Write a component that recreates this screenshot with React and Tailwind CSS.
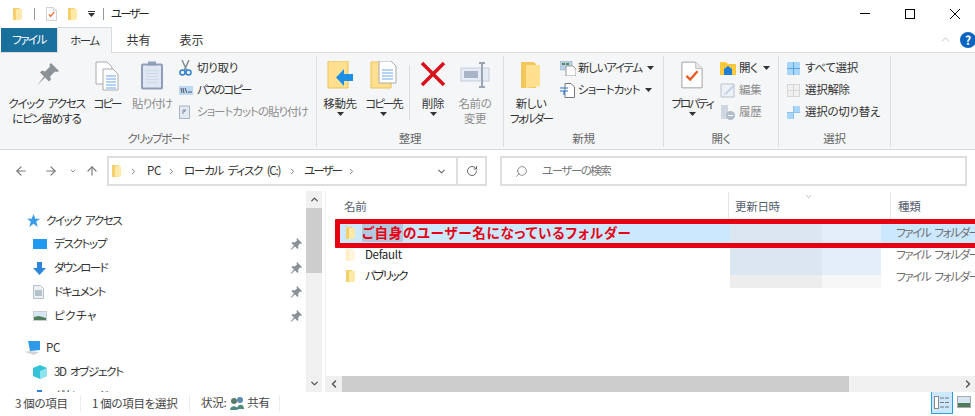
import { ArrowLeft, ArrowRight, ArrowUp, ChevronDown, ChevronUp, ChevronRight, RotateCw, Search } from 'lucide-react';

const Folder = ({ className = 'w-[10px] h-[14px]', light }) => (
  <svg viewBox="0 0 10 14" className={className}>
    <path d="M0 1h6l1 1v11H0z" fill={light ? '#fdeec4' : '#f5cf6b'} />
    <path d="M3 2h6v10l-6 1.5z" fill={light ? '#fff5dc' : '#ffe9a8'} />
  </svg>
);

const Caret = ({ className = '' }) => (
  <svg viewBox="0 0 7 4" className={`w-[7px] h-[4px] ${className}`}>
    <path d="M0 0h7L3.5 4z" fill="#333" />
  </svg>
);

const PinSmall = () => (
  <svg viewBox="0 0 12 12" className="w-[12px] h-[12px]">
    <path d="M7 0l5 5-1 1-1-.5L8 8l.5 2-1 1-2.500-2.500L1 12l-.5-.5L4 7.500 1.500 5l1-1 2 .5L7 2.500 6.500 1z" fill="#8a9299" />
  </svg>
);

const DocCheck = ({ className }) => (
  <svg viewBox="0 0 24 30" className={className}>
    <path d="M1 1h15l7 7v21H1z" fill="#fff" stroke="#9a9a9a" />
    <path d="M16 1v7h7" fill="#e8e8e8" stroke="#bbb" />
    <path d="M6 16l4 4 8-9" fill="none" stroke="#e8591f" strokeWidth="2.500" />
  </svg>
);

const CopyDocs = ({ className }) => (
  <svg viewBox="0 0 24 30" className={className}>
    <path d="M1 1h11l5 5v17H1z" fill="#fff" stroke="#aaa" />
    <path d="M8 8h10l5 5v16H8z" fill="#fff" stroke="#aaa" />
    <path d="M11 15h10M11 18h10M11 21h10M11 24h10M11 27h10" stroke="#6aa5e8" />
  </svg>
);

function Big({ w, lines, gray, caret, children }) {
  return (
    <div className={`flex flex-col items-center shrink-0 ${w}`}>
      <div className="h-[35px] flex items-start justify-center">{children}</div>
      {lines.map((l, i) => (
        <div key={i} className={`h-[15px] leading-[15px] whitespace-nowrap ${gray ? 'text-[#8d8d8d]' : 'text-[#333]'}`}>{l}</div>
      ))}
      {caret && <Caret className="mt-[1px]" />}
    </div>
  );
}

function Small({ icon, label, gray, caret, slot = 'w-[18px]' }) {
  return (
    <div className="h-[22px] flex items-center whitespace-nowrap">
      <div className={`${slot} shrink-0 flex items-center`}>{icon}</div>
      <span className={gray ? 'text-[#8d8d8d]' : 'text-[#333]'}>{label}</span>
      {caret && <Caret className="ml-[5px]" />}
    </div>
  );
}

function Group({ w, label, children }) {
  return (
    <div className={`${w} shrink-0 h-[91px] border-r border-[#dcdddf] flex flex-col`}>
      <div className="flex-1 flex">{children}</div>
      <div className="h-[18px] leading-[18px] text-center text-[#666]">{label}</div>
    </div>
  );
}

function Ribbon() {
  return (
    <div className="h-[97px] bg-[#f5f6f7] border-b border-[#dadbdc] flex pt-[3px]">
      <Group w="w-[317px]" label={<span className="tracking-[-1.4px]">クリップボード</span>}>
        <div className="flex pt-[5px] pl-[7px]">
          <Big w="w-[79px]" lines={[<span className="tracking-[-1.2px] [word-spacing:3px]">クイック アクセス</span>, <span className="tracking-[-1px]">にピン留めする</span>]}>
            <svg viewBox="0 0 24 24" className="w-[24px] h-[26px]">
              <path d="M16 1l8 8-2 1-2-.5-5 5 1 3-2 2-4-4-8 8 7-9-4-4 2-2 3 1 5-5-.5-2z" fill="#8b9298" />
            </svg>
          </Big>
          <Big w="w-[42px]" lines={[<span className="tracking-[-2px]">コピー</span>]}><CopyDocs className="w-[24px] h-[30px]" /></Big>
          <Big w="w-[48px]" gray lines={[<span className="tracking-[-1px]">貼り付け</span>]}>
            <svg viewBox="0 0 22 28" className="w-[22px] h-[29px]">
              <rect x="1" y="3" width="20" height="24" rx="1" fill="#dfe7f2" stroke="#8f9fb8" strokeWidth="2" />
              <rect x="7" y="0" width="8" height="4" fill="#8f9fb8" />
              <path d="M5 9h12M5 12h12M5 15h12M5 18h12M5 21h12" stroke="#cfd9e8" />
            </svg>
          </Big>
          <div className="pl-[3px] -mt-[4px]">
            <Small label="切り取り" icon={
              <svg viewBox="0 0 13 16" className="w-[13px] h-[16px]">
                <path d="M3 0l5 11M10 0L5 11" stroke="#7a8794" strokeWidth="1.400" />
                <circle cx="3.500" cy="12.500" r="2.500" fill="none" stroke="#2f7fcf" strokeWidth="1.500" />
                <circle cx="9.500" cy="12.500" r="2.500" fill="none" stroke="#2f7fcf" strokeWidth="1.500" />
              </svg>
            } />
            <Small label={<span className="tracking-[-2px]">パスのコピー</span>} icon={
              <svg viewBox="0 0 14 9" className="w-[14px] h-[9px]">
                <rect width="14" height="9" fill="#bcd8f2" />
                <path d="M2 2l1 5M4 2l1 5M6 2l2 5M9 6h4" stroke="#334" strokeWidth=".8" />
              </svg>
            } />
            <Small gray label={<span className="tracking-[-1px]">ショートカットの貼り付け</span>} icon={
              <svg viewBox="0 0 11 14" className="w-[11px] h-[14px]">
                <rect x=".5" y="1" width="10" height="12.500" fill="#e3e9f2" stroke="#a9b4c4" />
                <path d="M4 9V5h3M5 7l2-2" stroke="#7c8797" fill="none" />
              </svg>
            } />
          </div>
        </div>
      </Group>

      <Group w="w-[187px]" label="整理">
        <div className="flex pt-[5px] pl-[1px]">
          <Big w="w-[44px]" caret lines={['移動先']}>
            <svg viewBox="0 0 27 28" className="w-[27px] h-[28px]">
              <path d="M1 0h20v27H1z" fill="#ffe08f" stroke="#e8c25a" />
              <path d="M26 13v7h-9v5l-8-8.500L17 8v5z" fill="#1d8fe6" />
            </svg>
          </Big>
          <Big w="w-[43px]" caret lines={[<span className="tracking-[-2px]">コピー先</span>]}>
            <svg viewBox="0 0 27 28" className="w-[27px] h-[28px]">
              <path d="M1 1h20v26H1z" fill="#ffe08f" stroke="#e8c25a" />
              <path d="M9 0h12l5 5v17H9z" fill="#fff" stroke="#aaa" />
              <path d="M12 9h11M12 12h11M12 15h11M12 18h11" stroke="#6aa5e8" />
            </svg>
          </Big>
          <div className="w-px h-[55px] bg-[#dcdddf] ml-[4px] mt-[4px] shrink-0" />
          <Big w="w-[46px]" caret lines={['削除']}>
            <svg viewBox="0 0 26 26" className="w-[26px] h-[26px]">
              <path d="M2 2l22 22M24 2L2 24" stroke="#d8111c" strokeWidth="3.500" />
            </svg>
          </Big>
          <Big w="w-[38px]" gray lines={['名前の', '変更']}>
            <svg viewBox="0 0 30 28" className="w-[30px] h-[28px]">
              <rect x="1" y="7" width="28" height="13" fill="#e6ecf5" stroke="#c5cedb" />
              <rect x="4" y="10" width="14" height="7" fill="#a9b5c6" />
              <path d="M19 2h6M22 2v24M19 26h6" stroke="#9aa4b2" strokeWidth="2" fill="none" />
            </svg>
          </Big>
        </div>
      </Group>

      <Group w="w-[160px]" label="新規">
        <div className="flex pt-[5px]">
          <Big w="w-[54px]" lines={[<span className="tracking-[-0.5px]">新しい</span>, <span className="tracking-[-1.8px]">フォルダー</span>]}>
            <svg viewBox="0 0 20 28" className="w-[20px] h-[28px]">
              <path d="M0 1h13l2 2v24H0z" fill="#f2c85c" />
              <path d="M5 4h14v21L5 27z" fill="#ffe08f" />
            </svg>
          </Big>
          <div className="pl-[2px] -mt-[4px]">
            <Small caret label={<span className="tracking-[-1.3px]">新しいアイテム</span>} icon={
              <svg viewBox="0 0 16 15" className="w-[16px] h-[15px]">
                <rect x="0" y="0" width="12" height="9" fill="#b8cfe6" stroke="#8fa6bd" strokeWidth=".5" />
                <path d="M2 2h3v2H2zM6 2h3v2H6z" fill="#5b8a5e" />
                <path d="M6 5h7l3 3v7H6z" fill="#fff" stroke="#999" />
              </svg>
            } />
            <Small caret label={<span className="tracking-[-0.9px]">ショートカット</span>} icon={
              <svg viewBox="0 0 15 15" className="w-[15px] h-[15px]">
                <path d="M5 .5h6l3.500 3.500v10.500H5z" fill="#fff" stroke="#777" />
                <path d="M0 5h8M0 8h8" stroke="#2272c8" strokeWidth="1.200" />
                <path d="M4 8v4" stroke="#2272c8" strokeWidth="1.200" />
              </svg>
            } />
          </div>
        </div>
      </Group>

      <Group w="w-[115px]" label="開く">
        <div className="flex pt-[5px]">
          <Big w="w-[56px]" caret lines={[<span className="tracking-[-2px]">プロパティ</span>]}>
            <DocCheck className="w-[22px] h-[28px]" />
          </Big>
          <div className="-mt-[4px]">
            <Small caret slot="w-[19px]" label="開く" icon={
              <svg viewBox="0 0 16 14" className="w-[16px] h-[14px]">
                <path d="M0 1h6l2 2h8v11H0z" fill="#ffc83d" />
                <path d="M4 8l4-3 4 3v6H4z" fill="#1b7fd6" />
              </svg>
            } />
            <Small gray slot="w-[19px]" label="編集" icon={
              <svg viewBox="0 0 15 15" className="w-[15px] h-[15px]">
                <path d="M1 1h9l4 0v13H1z" fill="#eef1f5" stroke="#b9c2cd" />
                <path d="M5 10l8-8 2 1-8 8-3 1z" fill="#c3d4e6" />
              </svg>
            } />
            <Small gray slot="w-[19px]" label="履歴" icon={
              <svg viewBox="0 0 15 15" className="w-[15px] h-[15px]">
                <path d="M1 0h7v14H1z" fill="#cfd8e2" />
                <circle cx="10.500" cy="10.500" r="4.500" fill="#b2bdc9" />
                <path d="M8 10.500h5" stroke="#fff" />
              </svg>
            } />
          </div>
        </div>
      </Group>

      <Group w="w-[112px]" label="選択">
        <div className="pl-[8px] pt-[1px]">
          <Small label="すべて選択" icon={
            <div className="w-[13px] h-[13px] grid grid-cols-2 gap-px bg-[#5aa7e8]">
              <div className="bg-[#a9d6fb]" /><div className="bg-[#a9d6fb]" /><div className="bg-[#a9d6fb]" /><div className="bg-[#a9d6fb]" />
            </div>
          } />
          <Small label="選択解除" icon={
            <div className="w-[13px] h-[13px] grid grid-cols-2 gap-px bg-[#d6d6d6] p-px">
              <div className="bg-[#f0f0f0]" /><div className="bg-[#f0f0f0]" /><div className="bg-[#f0f0f0]" /><div className="bg-[#f0f0f0]" />
            </div>
          } />
          <Small label="選択の切り替え" icon={
            <div className="w-[13px] h-[13px] grid grid-cols-2 gap-px bg-[#8ec1ec]">
              <div className="bg-[#f5f6f7]" /><div className="bg-[#a9d6fb]" /><div className="bg-[#a9d6fb]" /><div className="bg-[#f5f6f7]" />
            </div>
          } />
        </div>
      </Group>
    </div>
  );
}

function SideRow({ icon, label, pinned, top, h = 'h-[24px]' }) {
  return (
    <div className={`${h} flex items-center shrink-0 text-[#333] ${top ? 'pl-[27px]' : 'pl-[33px]'}`}>
      <div className={`${top ? 'w-[19px]' : 'w-[21px]'} shrink-0 flex items-center`}>{icon}</div>
      <span className="flex-1 whitespace-nowrap">{label}</span>
      {pinned && <div className="mr-[4px] flex"><PinSmall /></div>}
    </div>
  );
}

function Sidebar() {
  return (
    <div className="w-[322px] shrink-0 flex h-full overflow-hidden">
      <div className="flex-1 flex flex-col pt-[18px] overflow-hidden">
        <SideRow top h="h-[23px]" label={<span className="tracking-[-1.3px] [word-spacing:3px]">クイック アクセス</span>} icon={
          <svg viewBox="0 0 14 14" className="w-[13px] h-[13px]"><path d="M7 0l2 5h5l-4 3 1.500 6L7 10.500 2.500 14 4 8 0 5h5z" fill="#3a9be8" /></svg>
        } />
        <SideRow pinned label={<span className="tracking-[-1.3px]">デスクトップ</span>} icon={<div className="w-[14px] h-[10px] bg-[#1e9bf0]" />} />
        <SideRow pinned label={<span className="tracking-[-1.6px]">ダウンロード</span>} icon={
          <svg viewBox="0 0 13 13" className="w-[13px] h-[13px]"><path d="M4 0h5v6h4l-6.500 7L0 6h4z" fill="#2b86dc" /></svg>
        } />
        <SideRow pinned label={<span className="tracking-[-1.3px]">ドキュメント</span>} icon={
          <svg viewBox="0 0 11 14" className="w-[11px] h-[14px]"><path d="M.5.5h7l3 3v10H.5z" fill="#eef1f4" stroke="#b7bfc8" /><path d="M2 6h7M2 8h7M2 10h7" stroke="#7b93a8" /></svg>
        } />
        <SideRow pinned label={<span className="tracking-[0.5px]">ピクチャ</span>} icon={
          <svg viewBox="0 0 14 10" className="w-[14px] h-[10px]"><rect width="14" height="10" fill="#c9ced3" /><rect x="1" y="1" width="12" height="8" fill="#d6e6f5" /><path d="M1 6l5-1 7 2v2H1z" fill="#4e7d5b" /></svg>
        } />
        <div className="h-[8px] shrink-0" />
        <SideRow top label="PC" icon={
          <svg viewBox="0 0 16 14" className="w-[16px] h-[14px] -ml-[2px]"><path d="M3 0h12v9l-10 1z" fill="#2d9be8" /><path d="M0 11l5-1 9 1-5 3z" fill="#d0d4d8" /></svg>
        } />
        <SideRow label={<span className="tracking-[-1.3px] [word-spacing:3px]">3D オブジェクト</span>} icon={
          <svg viewBox="0 0 14 14" className="w-[14px] h-[14px]"><path d="M7 0l7 3v8l-7 3-7-3V3z" fill="#35c3d8" /><path d="M7 6l7-3v8l-7 3z" fill="#8fe3ee" /></svg>
        } />
        <SideRow label={<span className="tracking-[-1.6px]">ダウンロード</span>} icon={
          <svg viewBox="0 0 13 13" className="w-[13px] h-[13px]"><path d="M4 0h5v6h4l-6.500 7L0 6h4z" fill="#2b86dc" /></svg>
        } />
      </div>
      <div className="w-[16px] shrink-0 bg-[#f0f0f0] flex flex-col items-center">
        <ChevronUp className="w-[11px] h-[17px] text-[#555] shrink-0" strokeWidth={3} />
        <div className="w-full h-[65px] bg-[#cdcdcd]" />
        <div className="flex-1" />
        <ChevronDown className="w-[11px] h-[17px] text-[#555] shrink-0" strokeWidth={3} />
      </div>
    </div>
  );
}

function BlurCells({ rows }) {
  return (
    <div className="w-[151px] ml-[30px] flex shrink-0">
      <div className={`w-[92px] h-full ${rows ? 'bg-[#dce6f0]' : 'bg-[#ededed]'}`} />
      <div className={`w-[59px] h-full ${rows ? 'bg-[#e3eef8]' : 'bg-[#f7f7f7]'}`} />
    </div>
  );
}

const TypeCell = ({ className = '' }) => (
  <span className={`ml-[15px] text-[#6d6d6d] whitespace-nowrap tracking-[-1.4px] [word-spacing:3px] ${className}`}>ファイル フォルダー</span>
);

function FileList() {
  return (
    <div className="flex-1 min-w-0 h-full flex flex-col border-l border-[#f0f0f0] ml-[3px] relative">
      <div className="h-[30px] pt-[1px] flex shrink-0 text-[#56606e] items-center relative">
        <div className="w-[403px] pl-[18px] h-full flex items-center border-r border-[#e5e5e5] shrink-0">名前</div>
        <div className="w-[162px] pl-[6px] h-full flex items-center border-r border-[#e5e5e5] shrink-0">更新日時</div>
        <div className="pl-[7px]">種類</div>
        <ChevronDown className="absolute left-[477px] top-[1px] w-[11px] h-[9px] text-[#8c8c8c]" strokeWidth={1.500} />
      </div>
      <div className="flex-1 min-h-0 overflow-hidden">
        <div className="h-[23px] flex ml-[9px] bg-[#cce8ff] items-center -mr-[2px]">
          <div className="w-[396px] shrink-0 h-full flex items-center pl-[11px]">
            <Folder />
            <span className="ml-[6px] font-bold text-[#e60012] text-[13.5px] tracking-[0.75px] [font-feature-settings:'normal'] whitespace-nowrap">
              <span className="bg-[#b0c9de]">ご自身</span>のユーザー名になっているフォルダー
            </span>
          </div>
          <div className="h-full flex shrink-0 -ml-[31px]"><BlurCells rows /></div>
          <TypeCell />
        </div>
        <div className="h-[22px] flex ml-[9px] items-center">
          <div className="w-[396px] shrink-0 h-full flex items-center pl-[11px] text-[#222]">
            <Folder light /><span className="ml-[9px]">Default</span>
          </div>
          <div className="h-full flex shrink-0 -ml-[31px]"><BlurCells rows /></div>
          <TypeCell />
        </div>
        <div className="h-[22px] flex ml-[9px] items-start">
          <div className="w-[396px] shrink-0 h-[20px] flex items-center pl-[11px] text-[#222]">
            <Folder /><span className="ml-[9px] tracking-[-1.6px]">パブリック</span>
          </div>
          <div className="h-full flex shrink-0 -ml-[31px] flex-col">
            <div className="h-[9px] flex"><BlurCells rows /></div>
            <div className="flex-1 flex"><BlurCells /></div>
          </div>
          <TypeCell className="leading-[20px]" />
        </div>
      </div>
      <div className="h-[16px] shrink-0 bg-[#f0f0f0] flex items-center">
        <ChevronRight className="w-[12px] h-[12px] text-[#555] rotate-180 ml-[2px] shrink-0" strokeWidth={3} />
        <div className="h-full w-[507px] bg-[#cdcdcd] ml-[2px] shrink-0" />
        <div className="flex-1" />
        <ChevronRight className="w-[12px] h-[12px] text-[#555] mr-px shrink-0" strokeWidth={3} />
      </div>
      {/* red annotation box drawn over the first row */}
      <div className="absolute left-[9px] -right-[5px] top-[28px] h-[29px] border-[5px] border-[#e60012] rounded-[1px]" />
    </div>
  );
}

export default function App() {
  return (
    <div className="w-[975px] h-[416px] overflow-hidden bg-white flex flex-col text-[11.5px] tracking-[-0.3px] text-[#333] [font-family:'Noto_Sans_CJK_JP','Noto_Sans',sans-serif] [font-feature-settings:'palt']">
      {/* Title bar */}
      <div className="h-[27px] shrink-0 flex items-center pl-[13px]">
        <Folder className="w-[10px] h-[14px]" />
        <div className="w-px h-[12px] bg-[#999] ml-[11px]" />
        <DocCheck className="w-[11px] h-[14px] ml-[11px]" />
        <Folder className="w-[10px] h-[14px] ml-[11px]" />
        <div className="ml-[10px] flex flex-col items-center gap-px">
          <div className="w-[7px] h-px bg-[#333]" />
          <Caret />
        </div>
        <div className="w-px h-[12px] bg-[#999] ml-[8px]" />
        <span className="ml-[7px] text-[#222] tracking-[-2px]">ユーザー</span>
        <div className="ml-auto flex items-center pr-[15px] gap-[35px]">
          <div className="w-[10px] h-px bg-black" />
          <div className="w-[10px] h-[10px] border border-black" />
          <svg viewBox="0 0 10 10" className="w-[10px] h-[10px]"><path d="M0 0l10 10M10 0L0 10" stroke="#000" /></svg>
        </div>
      </div>
      {/* Tabs */}
      <div className="h-[26px] shrink-0 flex border-b border-[#dadbdc] relative">
        <div className="ml-px w-[56px] h-[24px] mt-px bg-[#19709c] text-white flex items-center justify-center tracking-[-1.5px]">ファイル</div>
        <div className="w-[55px] h-[26px] bg-[#f5f6f7] border-x border-t border-[#dadbdc] flex items-center justify-center text-[#333] tracking-[-1.5px]">ホーム</div>
        <div className="w-[53px] flex items-center justify-center text-[12px] tracking-normal">共有</div>
        <div className="w-[53px] flex items-center justify-center text-[12px] tracking-normal">表示</div>
        <div className="ml-auto flex items-center">
          <ChevronUp className="w-[13px] h-[13px] text-[#b5b5b5] mr-[8px]" strokeWidth={1.500} />
          <div className="w-[16px] h-[16px] rounded-full bg-[#0a64c0] text-white font-bold flex items-center justify-center text-[12px] leading-none mr-[-1px]">?</div>
        </div>
      </div>
      <Ribbon />
      {/* Address row */}
      <div className="h-[41px] shrink-0 flex items-start pt-[6px]">
        <div className="w-[107px] h-[29px] shrink-0 flex items-center pl-[14px] text-[#777]">
          <ArrowLeft className="w-[14px] h-[14px]" strokeWidth={2} />
          <ArrowRight className="w-[14px] h-[14px] ml-[16px]" strokeWidth={2} />
          <ChevronDown className="w-[8px] h-[8px] ml-[11px]" strokeWidth={2.500} />
          <ArrowUp className="w-[14px] h-[14px] ml-[8px]" strokeWidth={2} />
        </div>
        <div className="w-[380px] h-[30px] shrink-0 border-2 border-[#dedede] flex items-center">
          <div className="pl-[3px]"><Folder /></div>
          <ChevronRight className="w-[9px] h-[9px] text-[#777] ml-[7px]" strokeWidth={2.500} />
          <span className="ml-[9px]">PC</span>
          <ChevronRight className="w-[9px] h-[9px] text-[#777] ml-[6px]" strokeWidth={2.500} />
          <span className="ml-[8px] tracking-[-1.2px] [word-spacing:3px]">ローカル ディスク (C:)</span>
          <ChevronRight className="w-[9px] h-[9px] text-[#777] ml-[8px]" strokeWidth={2.500} />
          <span className="ml-[7px] tracking-[-2px]">ユーザー</span>
          <ChevronRight className="w-[9px] h-[9px] text-[#777] ml-[6px]" strokeWidth={2.500} />
          <ChevronDown className="w-[11px] h-[11px] text-[#666] ml-auto mr-[9px]" strokeWidth={2.500} />
          <div className="w-[29px] h-full border-l-2 border-[#dedede] flex items-center justify-center">
            <RotateCw className="w-[12px] h-[12px] text-[#666]" strokeWidth={2} />
          </div>
        </div>
        <div className="w-[467px] h-[30px] ml-[13px] shrink-0 border-2 border-[#dedede] flex items-center pl-[13px] text-[#777]">
          <Search className="w-[13px] h-[13px] -scale-x-100" strokeWidth={1.500} />
          <span className="ml-[14px] tracking-[-1.5px]">ユーザーの検索</span>
        </div>
      </div>
      {/* Main */}
      <div className="flex-1 min-h-0 flex">
        <Sidebar />
        <FileList />
      </div>
      {/* Status bar */}
      <div className="h-[24px] shrink-0 flex items-center text-[#444] pb-[2px]">
        <div className="pl-[15px] w-[81px] border-r border-[#ececec] h-[16px] leading-[16px] whitespace-nowrap">3 個の項目</div>
        <div className="pl-[11px] w-[109px] border-r border-[#ececec] h-[16px] leading-[16px] whitespace-nowrap">1 個の項目を選択</div>
        <div className="pl-[11px] w-[90px] border-r border-[#ececec] h-[16px] flex items-center whitespace-nowrap">
          状況:
          <svg viewBox="0 0 14 13" className="w-[14px] h-[13px] ml-[4px]">
            <circle cx="4" cy="4" r="3" fill="#5b7a6a" /><circle cx="10" cy="3" r="3" fill="#5b8ab0" />
            <path d="M0 13c0-5 8-5 8 0zM7 12c0-5 7-6 7 0z" fill="#4f8a7e" />
          </svg>
          <span className="ml-[3px]">共有</span>
        </div>
        <div className="ml-auto flex items-start h-[24px] mr-[4px]">
          <div className="w-[22px] h-[23px] border border-[#26a0da] bg-[#cce8ff] flex items-center justify-center">
            <svg viewBox="0 0 16 13" className="w-[16px] h-[13px]">
              <rect x=".5" y=".5" width="4" height="12" fill="#fff" stroke="#888" />
              <path d="M6 2h4M11 2h4M6 6.500h4M11 6.500h4M6 11h4M11 11h4" stroke="#777" />
            </svg>
          </div>
          <div className="w-[14px] h-[12px] ml-[4px] mt-[5px] border border-[#aaa] bg-[#d6e6f5] flex items-end">
            <div className="w-full h-[4px] bg-[#4e7d5b]" />
          </div>
        </div>
      </div>
    </div>
  );
}
